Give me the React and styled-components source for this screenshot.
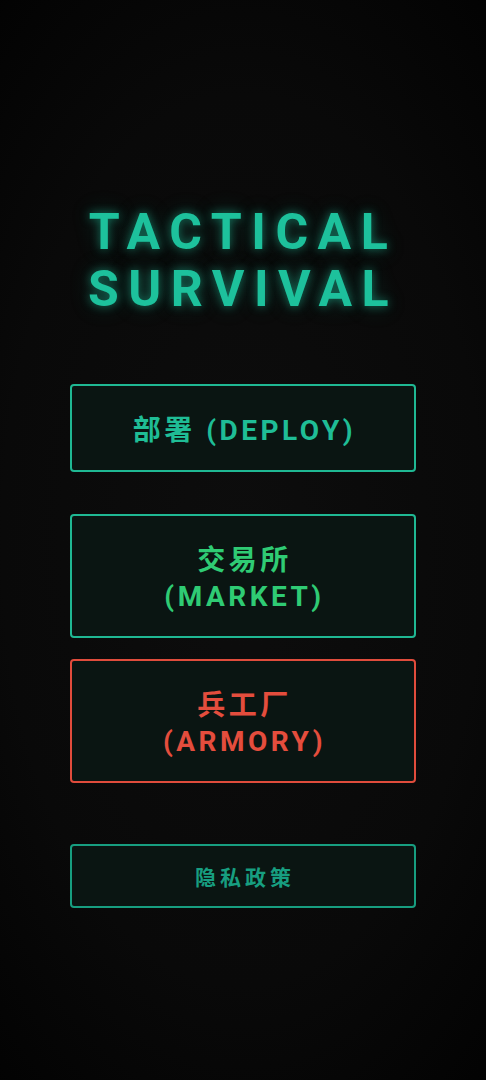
import React from "react";
import styled, { createGlobalStyle } from "styled-components";

const GlobalStyle = createGlobalStyle`
  html, body {
    margin: 0;
    padding: 0;
    background: #000;
  }
  * {
    box-sizing: border-box;
  }
`;

const tones = {
  teal: { text: "#1fbd96", border: "#1fb893" },
  green: { text: "#2fcb74", border: "#1fb893" },
  red: { text: "#e44d3d", border: "#e04c3c" },
  muted: { text: "#179e80", border: "#179e80" },
};

const menu = [
  { id: "deploy", lines: ["部署 (DEPLOY)"], tone: "teal", gap: 0 },
  { id: "market", lines: ["交易所", "(MARKET)"], tone: "green", gap: 42 },
  { id: "armory", lines: ["兵工厂", "(ARMORY)"], tone: "red", gap: 21 },
];

export default function App() {
  return (
    <>
      <GlobalStyle />
      <Screen>
        <Title>
          TACTICAL
          <br />
          SURVIVAL
        </Title>
        <Menu>
          {menu.map((item) => (
            <MenuButton key={item.id} tone={item.tone} gap={item.gap}>
              {item.lines.map((line) => (
                <span key={line}>{line}</span>
              ))}
            </MenuButton>
          ))}
          <PolicyButton>隐私政策</PolicyButton>
        </Menu>
      </Screen>
    </>
  );
}

const Screen = styled.div`
  width: 100%;
  min-height: 1080px;
  display: flex;
  flex-direction: column;
  align-items: center;
  padding-top: 204px;
  font-family: Roboto, "Noto Sans CJK SC", sans-serif;
  background: radial-gradient(
    ellipse 90% 75% at 50% 50%,
    #0d0d0d 0%,
    #090909 55%,
    #000 100%
  );
`;

const Title = styled.h1`
  margin: 0 0 66px 0;
  font-size: 50px;
  line-height: 57px;
  font-weight: 700;
  letter-spacing: 9.5px;
  text-align: center;
  color: #1dc19c;
  text-shadow: 0 0 10px rgba(29, 193, 156, 0.55), 0 0 22px rgba(29, 193, 156, 0.25);
`;

const Menu = styled.div`
  width: 346px;
  display: flex;
  flex-direction: column;
`;

const MenuButton = styled.button`
  margin-top: ${(p) => p.gap}px;
  width: 100%;
  display: flex;
  flex-direction: column;
  align-items: center;
  padding: 27px 0 21px 3px;
  border: 2px solid ${(p) => tones[p.tone].border};
  border-radius: 4px;
  background: #0a1512;
  color: ${(p) => tones[p.tone].text};
  font-family: Roboto, "Noto Sans CJK SC", sans-serif;
  font-size: 28px;
  line-height: 36px;
  font-weight: 700;
  letter-spacing: 3.5px;
  cursor: pointer;
`;

const PolicyButton = styled.button`
  margin-top: 61px;
  width: 100%;
  height: 64px;
  display: flex;
  align-items: center;
  justify-content: center;
  padding: 0 0 0 4px;
  border: 2px solid ${tones.muted.border};
  border-radius: 4px;
  background: #0a1512;
  color: ${tones.muted.text};
  font-family: "Noto Sans CJK SC", Roboto, sans-serif;
  font-size: 21px;
  font-weight: 700;
  letter-spacing: 4px;
  cursor: pointer;
`;
